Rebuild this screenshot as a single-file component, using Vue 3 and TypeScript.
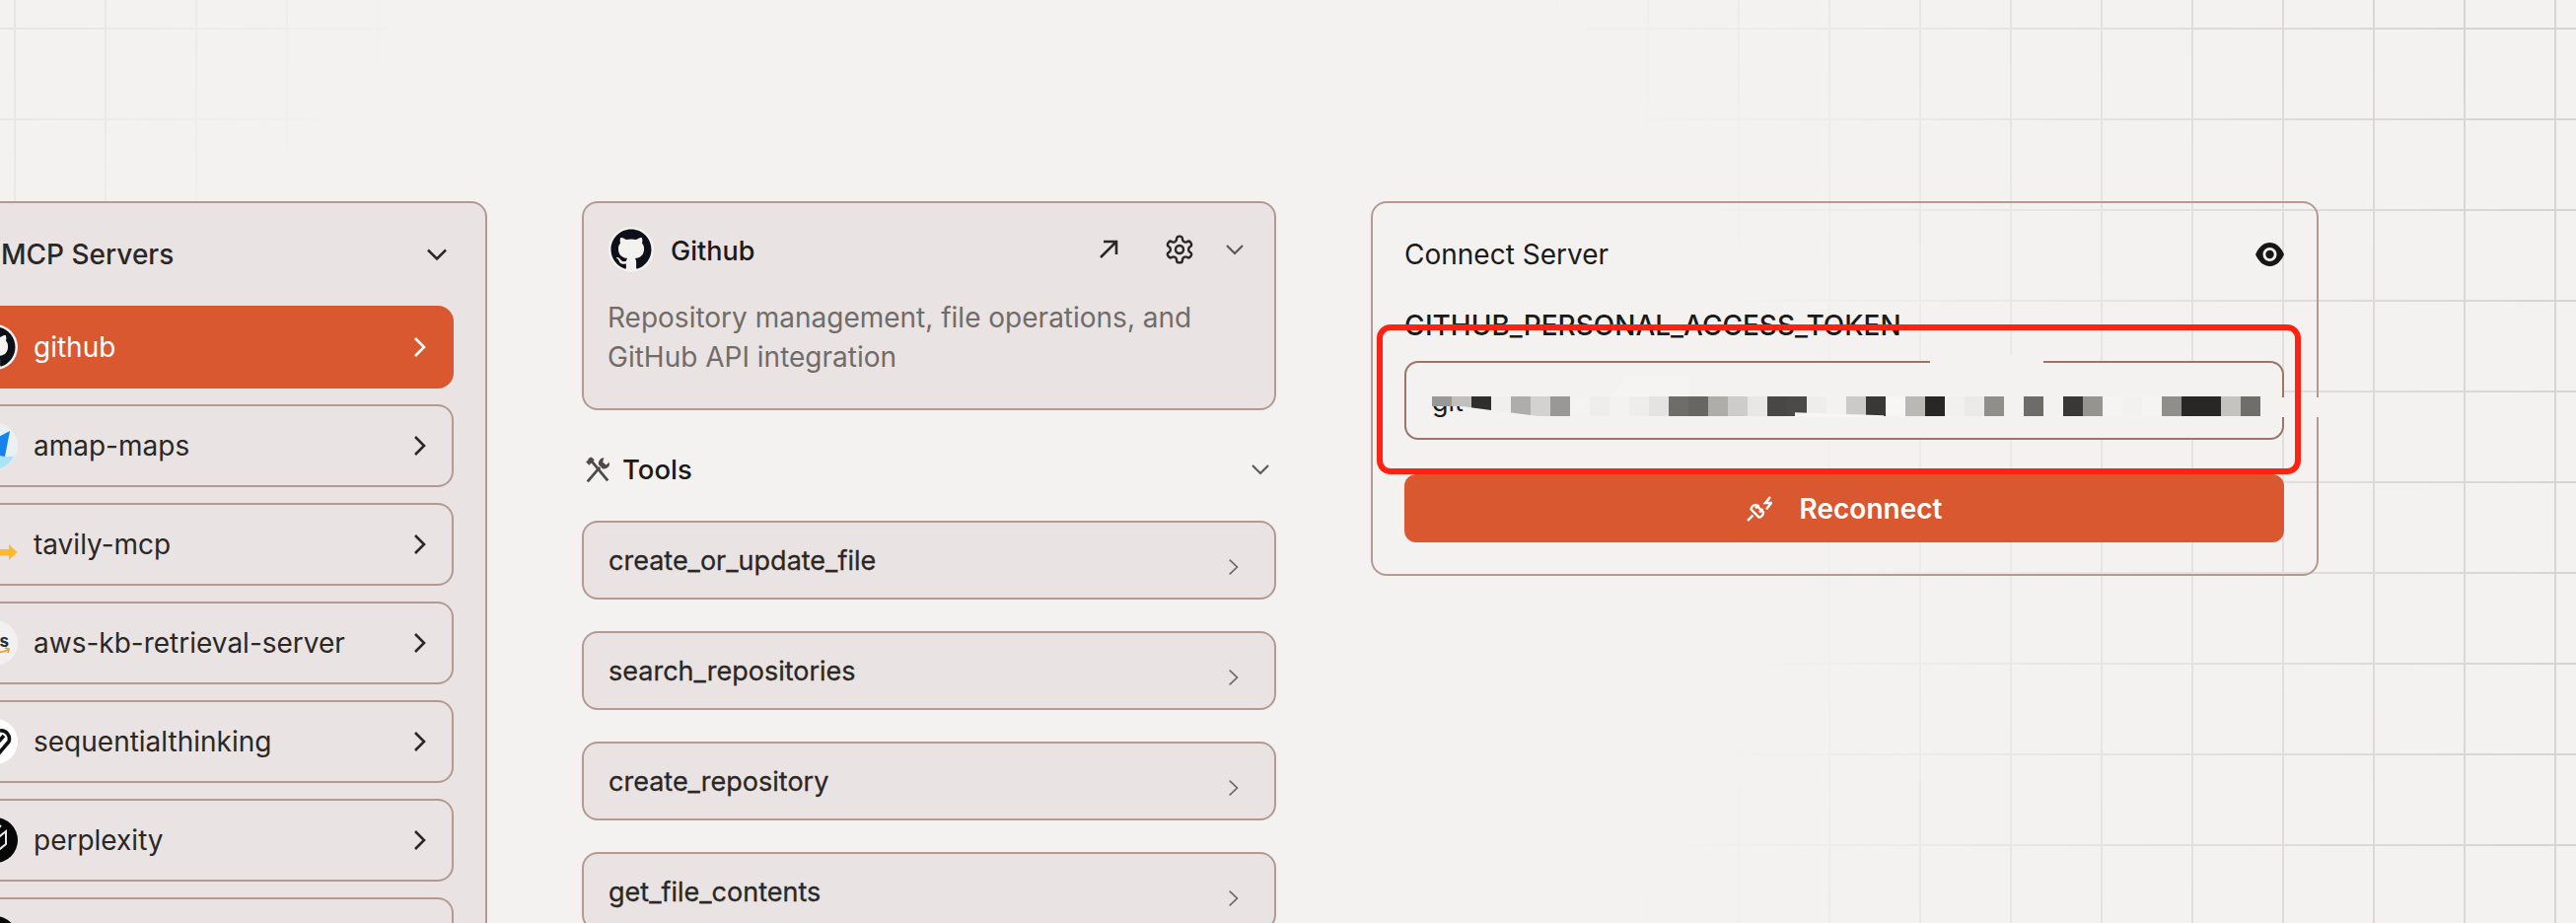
<script setup lang="ts">
const servers = [
  { id: 'github', name: 'github' },
  { id: 'amap', name: 'amap-maps' },
  { id: 'tavily', name: 'tavily-mcp' },
  { id: 'aws', name: 'aws-kb-retrieval-server' },
  { id: 'seq', name: 'sequentialthinking' },
  { id: 'perplexity', name: 'perplexity' },
  { id: 'more', name: '' },
]
const tools = ['create_or_update_file', 'search_repositories', 'create_repository', 'get_file_contents']
const blocks = [
  '#9a9896', '#c0bfbc', '#302e2c', '#f0efed', '#aeadaa', '#d3d2d0', '#999896', '#f4f3f1', '#eeedeb', '#f3f2f0', '#eeedeb',
  '#e4e3e1', '#6f6d6a', '#686663', '#aeadaa', '#cdccca', '#e8e7e5', '#494745', '#4c4a48', '#eeedeb', '#f3f2f0', '#cbcac8',
  '#3a3836', '#f7f6f4', '#b9b8b5', '#282725', '#f1f0ee', '#ebeae8', '#8f8e8b', '#f3f2f0', '#6e6c69', '#f3f2f0', '#3a3836',
  '#959491', '#f5f4f2', '#f2f1ef', '#f5f4f2', '#8f8e8b', '#282725', '#282725', '#c4c3c0', '#706e6b',
]
const octocat = 'M8 0C3.58 0 0 3.58 0 8c0 3.54 2.29 6.53 5.47 7.59.4.07.55-.17.55-.38 0-.19-.01-.82-.01-1.49-2.01.37-2.53-.49-2.69-.94-.09-.23-.48-.94-.82-1.13-.28-.15-.68-.52-.01-.53.63-.01 1.08.58 1.23.82.72 1.21 1.87.87 2.33.66.07-.52.28-.87.51-1.07-1.78-.2-3.64-.89-3.64-3.95 0-.87.31-1.59.82-2.15-.08-.2-.36-1.02.08-2.12 0 0 .67-.21 2.2.82.64-.18 1.32-.27 2-.27.68 0 1.36.09 2 .27 1.53-1.04 2.2-.82 2.2-.82.44 1.1.16 1.92.08 2.12.51.56.82 1.28.82 2.15 0 3.07-1.87 3.75-3.65 3.95.29.25.54.73.54 1.48 0 1.07-.01 1.93-.01 2.2 0 .21.15.46.55.38A8.013 8.013 0 0016 8c0-4.42-3.58-8-8-8z'
</script>

<template>
  <div class="page">
    <div class="grid"></div>
    <div class="layout">
      <section class="card servers">
        <header class="servers-head">
          <span class="servers-title">MCP Servers</span>
          <svg class="chev-head" viewBox="0 0 24 24"><path d="M3 7.500l9 9 9-9" /></svg>
        </header>
        <ul class="server-list">
          <li v-for="(s, i) in servers" :key="s.id" class="server" :class="{ active: i === 0 }">
            <svg class="logo" viewBox="0 0 46 46">
              <template v-if="s.id === 'github'">
                <circle cx="23" cy="23" r="23" fill="#f3f2f0" />
                <path :d="octocat" transform="translate(2.500 2.500) scale(2.560)" fill="#0d1117" />
              </template>
              <template v-else-if="s.id === 'amap'">
                <circle cx="23" cy="23" r="23" fill="#e9f1f4" />
                <path d="M5 34h37a23 23 0 0 1-38 5z" fill="#a8e4f8" />
                <path d="M38 8L8 24l14 7-2 9 6-7 7 1z" fill="#1683ec" />
              </template>
              <template v-else-if="s.id === 'tavily'">
                <path d="M24 28h13v-5l8.500 8-8.500 8v-4.500H24z" fill="#ffb92f" />
              </template>
              <template v-else-if="s.id === 'aws'">
                <circle cx="23" cy="23" r="23" fill="#f2f0f0" />
                <text x="20" y="27" class="aws">aws</text>
                <path d="M9 29c7 4 19 5 27 1" fill="none" stroke="#f5962a" stroke-width="1.8" />
                <path d="M33 28l4 1-1 4" fill="none" stroke="#f5962a" stroke-width="1.6" />
              </template>
              <template v-else-if="s.id === 'seq'">
                <circle cx="23" cy="23" r="23" fill="#fff" />
                <path d="M24 5c-6 0-8 4-7 8 -5 2-7 7-3 12M28 12c6-1 11 5 9 11L26 36c-3 3-8 2-10-1l16-18" fill="none" stroke="#111" stroke-width="3.6" />
              </template>
              <template v-else>
                <circle cx="23" cy="23" r="23" fill="#070707" />
                <path d="M23 8v30M12 14l11 9 11-9v13l-11 9-11-9zM12 14v13M34 14v13M29 8l-6 7-6-7" fill="none" stroke="#e9e9e9" stroke-width="2" />
              </template>
            </svg>
            <span class="server-name">{{ s.name }}</span>
            <svg class="chev-row" viewBox="0 0 24 24"><path d="M7 3l9 9-9 9" /></svg>
          </li>
        </ul>
      </section>

      <div class="detail">
        <section class="card info">
          <div class="info-head">
            <svg class="logo" viewBox="0 0 46 46">
              <circle cx="23" cy="23" r="23" fill="#f3f2f0" />
              <path :d="octocat" transform="translate(2.500 2.500) scale(2.560)" fill="#0d1117" />
            </svg>
            <span class="info-title">Github</span>
            <div class="actions">
              <svg class="act-arrow" viewBox="0 0 30 30"><path d="M7 23L22 8M10 7h13v13" /></svg>
              <svg class="act-gear" viewBox="0 0 24 24">
                <path d="M12.22 2h-.44a2 2 0 0 0-2 2v.18a2 2 0 0 1-1 1.73l-.43.25a2 2 0 0 1-2 0l-.15-.08a2 2 0 0 0-2.73.73l-.22.38a2 2 0 0 0 .73 2.73l.15.1a2 2 0 0 1 1 1.72v.51a2 2 0 0 1-1 1.74l-.15.09a2 2 0 0 0-.73 2.73l.22.38a2 2 0 0 0 2.73.73l.15-.08a2 2 0 0 1 2 0l.43.25a2 2 0 0 1 1 1.73V20a2 2 0 0 0 2 2h.44a2 2 0 0 0 2-2v-.18a2 2 0 0 1 1-1.73l.43-.25a2 2 0 0 1 2 0l.15.08a2 2 0 0 0 2.73-.73l.22-.39a2 2 0 0 0-.73-2.73l-.15-.08a2 2 0 0 1-1-1.74v-.5a2 2 0 0 1 1-1.74l.15-.09a2 2 0 0 0 .73-2.73l-.22-.38a2 2 0 0 0-2.73-.73l-.15.08a2 2 0 0 1-2 0l-.43-.25a2 2 0 0 1-1-1.73V4a2 2 0 0 0-2-2z" />
                <circle cx="12" cy="12" r="3" />
              </svg>
              <svg class="act-chev" viewBox="0 0 24 24"><path d="M4 8l8 8 8-8" /></svg>
            </div>
          </div>
          <p class="info-desc">Repository management, file operations, and GitHub API integration</p>
        </section>

        <div class="tools-head">
          <svg class="tools-icon" viewBox="0 0 26 26">
            <path d="M3.500 24.500L15 11" />
            <path d="M5 2.500l17.500 21" />
            <path d="M2 6l5-4.500 3 2.500-5 5z" class="solid" />
            <path d="M19 2.200a5 5 0 0 0-5 6.500l3.500 3.500a5 5 0 0 0 6.500-6l-3.200 2.600-3-2.800z" class="solid" />
          </svg>
          <span class="tools-title">Tools</span>
          <svg class="tools-chev" viewBox="0 0 24 24"><path d="M4 8l8 8 8-8" /></svg>
        </div>

        <ul class="tool-list">
          <li v-for="t in tools" :key="t" class="card tool">
            <span class="tool-name">{{ t }}</span>
            <svg class="tool-chev" viewBox="0 0 14 20"><path d="M2 1.500l9 8.500-9 8.500" /></svg>
          </li>
        </ul>
      </div>

      <section class="connect">
        <header class="connect-head">
          <span class="connect-title">Connect Server</span>
          <svg class="eye" viewBox="0 0 29 24">
            <path d="M0 12C3 5 8 0 14.500 0S26 5 29 12c-3 7-8 12-14.500 12S3 19 0 12z" fill="#161616" />
            <circle cx="14.500" cy="12" r="7" fill="#f3f2f0" />
            <circle cx="14.500" cy="12" r="4.200" fill="#161616" />
          </svg>
        </header>
        <label class="token-label">GITHUB_PERSONAL_ACCESS_TOKEN</label>
        <div class="token-input">
          <span class="token-value">git</span>
          <div class="smudge-c"></div>
          <div class="mosaic">
            <i v-for="(c, i) in blocks" :key="i" :style="{ background: c }"></i>
          </div>
          <div class="smudge-a"></div>
          <div class="smudge-b"></div>
          <div class="gap-top"></div>
        </div>
        <button class="reconnect">
          <svg class="plug" viewBox="0 0 26 26">
            <path d="M1 25l5.500-5.500" />
            <path d="M4.500 13.500l8 8c2.500-.3 4.500-2.500 4.500-5l-7.500-7.500c-2.500 0-4.700 2-5 4.500z" />
            <path d="M9 12.500l3.500-3.500M13 16.500l3.500-3.500" />
            <path d="M24 1l-5 6h6l-5 6.500" />
          </svg>
          <span>Reconnect</span>
        </button>
        <div class="gap-right"></div>
        <div class="annotation"></div>
      </section>
    </div>
  </div>
</template>

<style>
html, body { margin: 0; background: #f3f2f0; }
</style>

<style scoped>
* { box-sizing: border-box; }
.page {
  position: relative;
  width: 2612px;
  height: 936px;
  overflow: hidden;
  background: #f3f2f0;
  font-family: Inter, "Liberation Sans", sans-serif;
  color: #1c1a19;
}
.grid {
  position: absolute;
  inset: 0;
  background-image:
    linear-gradient(to right, #d6d4d2 2px, transparent 2px),
    linear-gradient(to bottom, #d6d4d2 2px, transparent 2px);
  background-size: 92px 92px;
  background-position: 14px 28px;
  -webkit-mask-image: radial-gradient(ellipse 1600px 1400px at 1000px 520px, transparent 50%, black 100%);
  mask-image: radial-gradient(ellipse 1600px 1400px at 1000px 520px, transparent 50%, black 100%);
}
.layout {
  position: relative;
  display: flex;
  align-items: flex-start;
  padding-top: 204px;
  margin-left: -60px;
}
.card {
  background: #e9e3e3;
  border: 2px solid #b49a90;
  border-radius: 16px;
}
ul { list-style: none; margin: 0; padding: 0; }
svg { display: block; flex: none; }

/* servers */
.servers {
  width: 554px;
  padding: 0 32px 24px 18px;
  flex: none;
}
.servers-head {
  display: flex;
  align-items: center;
  justify-content: space-between;
  height: 104px;
  padding: 0 5px 0 41px;
}
.servers-title { font-size: 28px; font-weight: 500; color: #2a2725; }
.chev-head { width: 24px; height: 24px; fill: none; stroke: #2a2725; stroke-width: 2.500; }
.server-list { display: flex; flex-direction: column; gap: 16px; }
.server {
  display: flex;
  align-items: center;
  height: 84px;
  padding: 0 20px 0 10px;
  border: 2px solid #b49a90;
  border-radius: 16px;
  color: #2a2725;
  font-size: 28px;
}
.server.active { background: #d9582f; border-color: #d9582f; color: #fff; }
.logo { width: 46px; height: 46px; }
.aws { font: 700 17px Inter, sans-serif; fill: #232f3e; text-anchor: middle; }
.server-name { margin-left: 16px; flex: 1; }
.chev-row { width: 24px; height: 24px; fill: none; stroke: currentColor; stroke-width: 2.600; }

/* detail */
.detail { width: 704px; margin-left: 96px; flex: none; }
.info { height: 212px; padding: 24px 28px 0 25px; }
.info-head { display: flex; align-items: center; }
.info-title { margin: 2px 0 0 17px; font-size: 27px; font-weight: 500; color: #1c1a19; }
.actions { margin-left: auto; display: flex; align-items: center; }
.act-arrow { width: 30px; height: 30px; fill: none; stroke: #2a2725; stroke-width: 2.600; }
.act-gear { width: 32px; height: 32px; margin-left: 41px; fill: none; stroke: #2a2725; stroke-width: 1.800; }
.act-chev { width: 24px; height: 24px; margin-left: 28px; fill: none; stroke: #5e5a57; stroke-width: 2.200; }
.info-desc { margin: 26px 0 0 -1px; font-size: 28px; line-height: 40px; color: #716c68; }
.tools-head { display: flex; align-items: center; height: 34px; margin-top: 43px; padding: 0 4px 0 2px; }
.tools-icon { width: 28px; height: 28px; fill: none; stroke: #4d4a47; stroke-width: 2.600; }
.tools-icon .solid { fill: #4d4a47; stroke: none; }
.tools-title { margin-left: 11px; font-size: 27.500px; font-weight: 500; }
.tools-chev { margin-left: auto; width: 24px; height: 24px; fill: none; stroke: #5e5a57; stroke-width: 2.200; }
.tool-list { display: flex; flex-direction: column; gap: 32px; margin-top: 35px; }
.tool {
  position: relative;
  display: flex;
  align-items: center;
  justify-content: space-between;
  height: 80px;
  padding: 0 35px 0 25px;
}
.tool-name { font-size: 27px; color: #2a2725; -webkit-text-stroke: 0.3px #2a2725; }
.tool-chev { width: 12px; height: 18px; margin-top: 13px; fill: none; stroke: #6f6a66; stroke-width: 2; }

/* connect */
.connect {
  position: relative;
  width: 961px;
  height: 380px;
  margin-left: 96px;
  padding: 33px 33px 0 32px;
  border: 2px solid #b49a90;
  border-radius: 16px;
  flex: none;
}
.connect-head { display: flex; align-items: center; justify-content: space-between; height: 38px; }
.connect-title { font-size: 28px; color: #1c1a19; }
.eye { width: 29px; height: 24px; }
.token-label { display: block; margin-top: 36px; font-size: 28px; font-weight: 500; line-height: 34px; color: #1c1a19; }
.token-input {
  position: relative;
  display: flex;
  align-items: center;
  height: 80px;
  margin-top: 19px;
  padding-left: 26px;
  background: #f3f2f0;
  border: 2px solid #9b7567;
  border-radius: 14px;
  font-size: 27px;
}
.token-value { margin-top: 2px; }
.smudge-c { position: absolute; left: 23px; top: 16px; width: 70px; height: 20px; background: #f3f2f0; }
.mosaic { position: absolute; left: 26px; top: 34px; display: flex; height: 20px; clip-path: polygon(0 0, 100% 0, 100% 100%, 108px 100%, 60px 14px, 30px 10px, 0 10px); }
.mosaic i { width: 20px; height: 20px; display: block; }
.smudge-a { position: absolute; left: 207px; top: 14px; width: 80px; height: 20px; background: #f5f4f2; clip-path: polygon(0 100%, 20% 0, 100% 0, 100% 100%); }
.smudge-b { position: absolute; left: 394px; top: 49px; width: 90px; height: 6px; background: #f7f6f4; clip-path: polygon(0 20%, 100% 70%, 100% 100%, 0 100%); }
.gap-top { position: absolute; left: 531px; top: -8px; width: 115px; height: 12px; background: #f3f2f0; clip-path: polygon(0 0, 100% 0, 100% 100%, 92% 70%, 0 70%); }
.reconnect {
  display: flex;
  align-items: center;
  justify-content: center;
  gap: 28px;
  width: 100%;
  height: 69px;
  margin-top: 35px;
  padding: 0;
  border: 0;
  border-radius: 12px;
  background: #d9582f;
  color: #fff;
  font: 600 28px Inter, sans-serif;
}
.plug { width: 26px; height: 26px; fill: none; stroke: #fff; stroke-width: 2.400; }
.gap-right { position: absolute; left: 918px; top: 197px; width: 44px; height: 20px; background: #f3f2f0; }
.annotation {
  position: absolute;
  left: 4px;
  top: 123px;
  width: 937px;
  height: 152px;
  border: 6px solid #ff2212;
  border-radius: 14px;
}
</style>
